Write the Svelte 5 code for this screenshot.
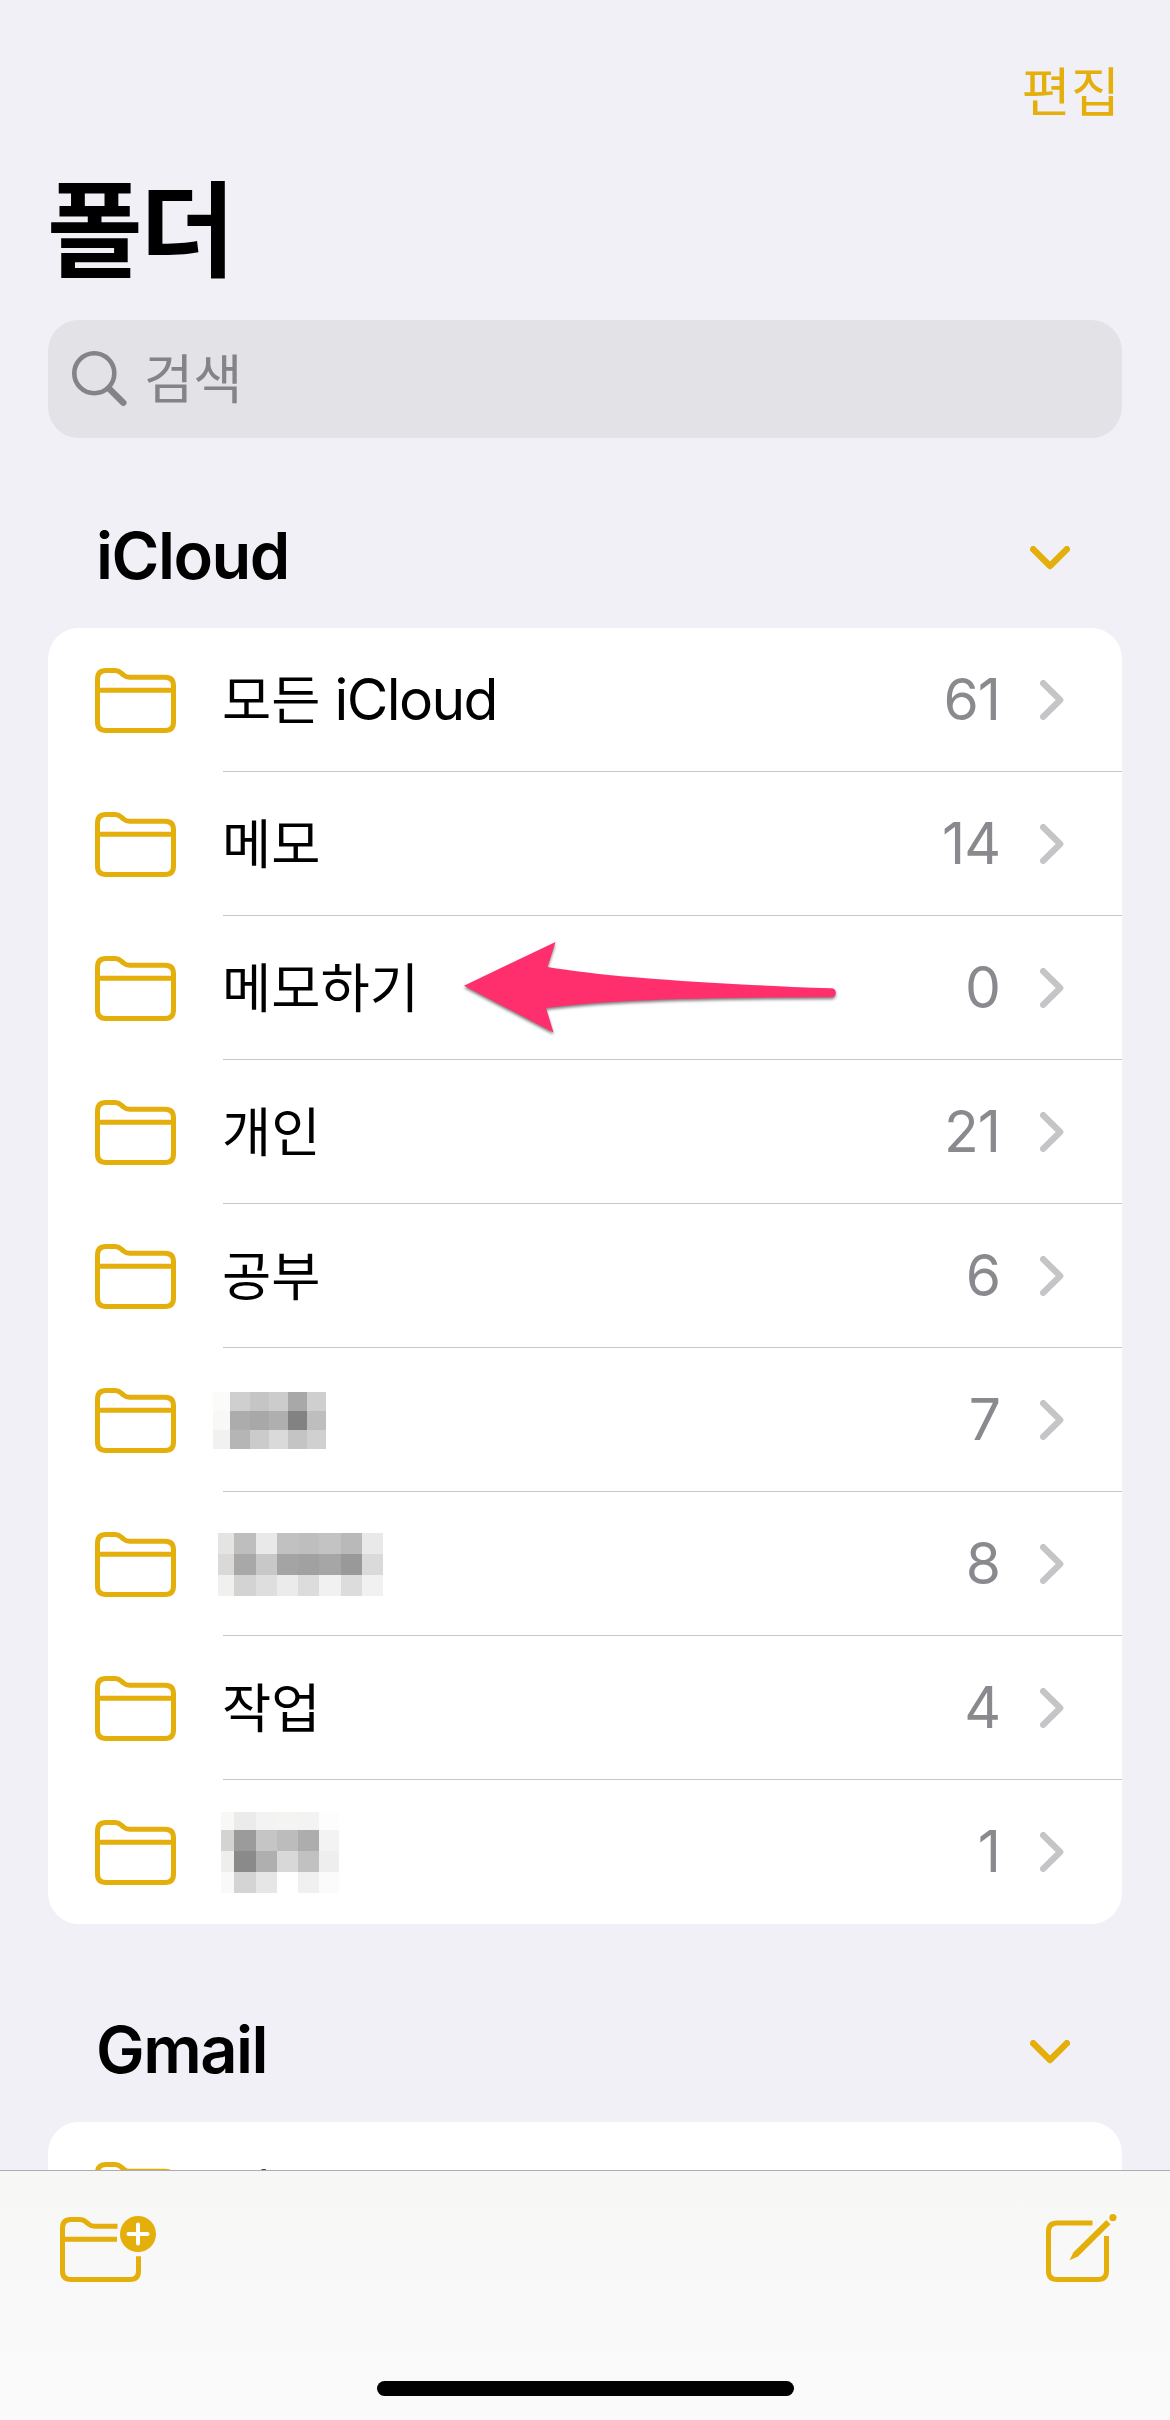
<script lang="ts">
	type Mosaic = { shift: number; xs: number[]; ys: number[]; shades: string[][] };
	type Folder = { name?: string; latin?: string; count: number; marked?: boolean; mosaic?: Mosaic };

	const icloud: Folder[] = [
		{ name: '모든', latin: 'iCloud', count: 61 },
		{ name: '메모', count: 14 },
		{ name: '메모하기', count: 0, marked: true },
		{ name: '개인', count: 21 },
		{ name: '공부', count: 6 },
		{
			count: 7,
			mosaic: {
				shift: -10,
				xs: [0, 17, 36.5, 55.5, 74.5, 94, 113],
				ys: [0, 19, 38, 57],
				shades: [
					['#fbfbf9', '#cfcfcf', '#c5c5c5', '#cccccc', '#a8a8a8', '#cfcfcf'],
					['#f8f8f6', '#acacac', '#a8a8a8', '#afafaf', '#828282', '#bebebe'],
					['#f1f1ef', '#b5b5b5', '#cbcbcb', '#dadada', '#c4c4c4', '#d0d0d0']
				]
			}
		},
		{
			count: 8,
			mosaic: {
				shift: -5,
				xs: [0, 16, 37.5, 58.7, 80, 101, 122.5, 143.7, 165],
				ys: [0, 21, 42, 63],
				shades: [
					['#e4e4e2', '#bebebe', '#e9e9e9', '#c1c1c1', '#bebebe', '#c3c3c3', '#b9b9b9', '#e9e9e9'],
					['#dad9d7', '#a8a8a8', '#c8c8c8', '#a4a4a4', '#a1a1a1', '#a6a6a6', '#999999', '#dadada'],
					['#f0f0ee', '#d3d3d3', '#dedede', '#ebebeb', '#dcdcdc', '#f1f1f1', '#dcdcdc', '#f1f1f1']
				]
			}
		},
		{ name: '작업', count: 4 },
		{
			count: 1,
			mosaic: {
				shift: -2,
				xs: [0, 13, 34.7, 55.7, 77, 98, 118],
				ys: [0, 18, 39, 60, 81],
				shades: [
					['#f8f8f6', '#ebebeb', '#f3f3f3', '#f4f4f2', '#f3f3f3', '#fdfdfd'],
					['#d3d3d1', '#9b9b9b', '#c5c5c5', '#bcbcbc', '#adadad', '#f3f3f3'],
					['#eeeeec', '#8a8a8a', '#afafaf', '#d8d8d8', '#c1c1c1', '#eeeeee'],
					['#f9f9f9', '#d4d4d4', '#e6e6e6', '#ffffff', '#f0f0f0', '#fbfbfb']
				]
			}
		}
	];

	const sections: { title: string; folders: Folder[] }[] = [
		{ title: 'iCloud', folders: icloud },
		{ title: 'Gmail', folders: [{ name: '메모', count: 0 }] }
	];
</script>

<div class="screen">
	<div class="scroll">
		<nav><button class="edit">편집</button></nav>
		<h1>폴더</h1>
		<div class="search">
			<svg width="58" height="58" viewBox="0 0 58 58">
				<circle cx="24.3" cy="23.3" r="20" stroke-width="4.6" />
				<path d="M39 38.5L53.3 52.8" stroke-width="6.4" />
			</svg>
			<span>검색</span>
		</div>

		{#each sections as section}
			<section>
				<header>
					<h2>{section.title}</h2>
					<svg class="down" width="40" height="24" viewBox="0 0 40 24">
						<path d="M3.2 3.2L20 20L36.8 3.2" />
					</svg>
				</header>
				<div class="card">
					{#each section.folders as folder}
						<div class="row">
							<svg class="folder" width="81" height="65" viewBox="0 0 81 65">
								<path
									d="M2.5 54V11Q2.5 2.5 11 2.5H20Q23.5 2.5 26 4.8L28.5 7Q31 9.3 34.5 9.3H70Q78.5 9.3 78.5 17.8V54Q78.5 62.5 70 62.5H11Q2.5 62.5 2.5 54ZM2.5 22.3H78.5"
								/>
							</svg>
							<div class="content">
								{#if folder.mosaic}
									{@const m = folder.mosaic}
									<svg
										class="mosaic"
										width={m.xs[m.xs.length - 1]}
										height={m.ys[m.ys.length - 1]}
										style:margin-left="{m.shift}px"
									>
										{#each m.shades as line, y}
											{#each line as shade, x}
												<rect
													x={m.xs[x]}
													y={m.ys[y]}
													width={m.xs[x + 1] - m.xs[x]}
													height={m.ys[y + 1] - m.ys[y]}
													fill={shade}
												/>
											{/each}
										{/each}
									</svg>
								{:else}
									<span class="name">{folder.name}</span>
								{/if}
								{#if folder.latin}
									<span class="latin">{folder.latin}</span>
								{/if}
								{#if folder.marked}
									<svg class="arrow" width="374" height="94" viewBox="464 940 374 94">
										<path
											d="M465 984.7L556.5 941L548.5 966Q630 980 832 987.3Q836.8 987.5 836.8 991.8Q836.8 996.3 832 996.2Q625 996 547 1007L554.5 1031.5Z"
										/>
									</svg>
								{/if}
								<span class="count">{folder.count}</span>
								<svg class="next" width="24" height="40" viewBox="0 0 24 40">
									<path d="M3.2 3.2L20.2 20L3.2 36.8" />
								</svg>
							</div>
						</div>
					{/each}
				</div>
			</section>
		{/each}
	</div>

	<footer>
		<div class="tools">
			<svg class="tool" width="98" height="68" viewBox="0 0 98 68">
				<path
					d="M57.5 11.3H34.5Q31 11.3 28.5 9L26 6.8Q23.5 4.5 20 4.5H11Q2.5 4.5 2.5 13V56Q2.5 64.5 11 64.5H70Q78.5 64.5 78.5 56V41.3M2.5 24.3H57"
				/>
				<circle cx="78" cy="19" r="18" />
				<path class="plus" d="M78 9.5V28.5M68.5 19H87.5" />
			</svg>
			<svg class="tool" width="72" height="72" viewBox="0 0 72 72">
				<path d="M46.5 8H11Q2.500 8 2.500 16.500V56Q2.500 64.500 11 64.500H52Q60.500 64.500 60.500 56V21" />
				<path class="cut" d="M40 27.500L70 -2.500" />
				<path class="pencil" d="M60.300 5L64.500 9.200L32 41.500L23.500 45.200L27.500 37.200Z" />
				<circle cx="66.900" cy="2.600" r="3.600" />
			</svg>
		</div>
		<div class="home"></div>
	</footer>
</div>

<style>
	:global(body) {
		margin: 0;
	}
	.screen {
		display: flex;
		flex-direction: column;
		width: 1170px;
		height: 2420px;
		overflow: hidden;
		background: #f1f0f6;
		color: #000;
		font-family: Inter, 'Noto Sans CJK KR', sans-serif;
	}
	.scroll {
		height: 2170px;
		flex: none;
		overflow: hidden;
		padding: 0 48px;
		box-sizing: border-box;
	}
	svg {
		display: block;
		flex: none;
		fill: none;
		stroke-linecap: round;
		stroke-linejoin: round;
	}
	nav {
		display: flex;
		justify-content: flex-end;
		padding: 49px 2px 0 0;
	}
	.edit {
		border: 0;
		padding: 0;
		background: none;
		color: #e4af0b;
		font: 53.5px/80px 'Noto Sans CJK KR', sans-serif;
	}
	h1 {
		margin: 30px 0 0 -1px;
		height: 161px;
		font: 700 104px/130px 'Noto Sans CJK KR', sans-serif;
		letter-spacing: -3px;
	}
	.search {
		display: flex;
		align-items: center;
		gap: 16px;
		height: 118px;
		padding-left: 22px;
		border-radius: 31px;
		background: #e3e2e7;
		color: #838388;
		font: 53.5px/80px 'Noto Sans CJK KR', sans-serif;
	}
	.search svg {
		stroke: #838388;
	}
	.search span {
		padding-bottom: 6px;
	}
	section header {
		display: flex;
		align-items: center;
		justify-content: space-between;
		box-sizing: border-box;
		height: 190px;
		padding: 48px 52px 0 48px;
	}
	section + section header {
		height: 198px;
		padding-top: 56px;
	}
	h2 {
		margin: 0;
		padding-bottom: 2px;
		font-size: 65px;
		line-height: 80px;
		font-weight: 600;
		letter-spacing: -1.5px;
	}
	.down {
		margin-top: 2px;
		stroke: #e4af0b;
		stroke-width: 6.4;
	}
	.card {
		border-radius: 31px;
		background: #fff;
	}
	.row {
		display: flex;
		align-items: center;
		gap: 47px;
		height: 144px;
		padding-left: 47px;
	}
	.folder {
		stroke: #e4af0b;
		stroke-width: 5;
	}
	.content {
		display: flex;
		flex: 1;
		align-items: center;
		height: 143px;
		padding-right: 58px;
		border-bottom: 1px solid #c6c6c8;
	}
	.row:last-child .content {
		border-color: transparent;
	}
	.name {
		margin-left: -1px;
		padding-bottom: 6px;
		font: 53.5px/80px 'Noto Sans CJK KR', sans-serif;
	}
	.latin {
		margin-left: 14px;
		font-size: 57px;
		line-height: 80px;
		letter-spacing: -1.6px;
	}
	.mosaic {
		margin-top: 2px;
		shape-rendering: crispEdges;
	}
	.arrow {
		margin-left: 44px;
		overflow: visible;
		fill: #ff2f6d;
		filter: drop-shadow(0 2px 1.5px rgba(0, 0, 0, 0.5));
	}
	.count {
		margin-left: auto;
		color: #8a8a8e;
		font-size: 57px;
		line-height: 80px;
		letter-spacing: -1px;
	}
	.next {
		margin-left: 40px;
		stroke: #c5c5c7;
		stroke-width: 6.4;
	}
	footer {
		display: flex;
		flex: 1;
		flex-direction: column;
		align-items: center;
		justify-content: space-between;
		border-top: 1px solid #adadb0;
		background: linear-gradient(#f7f7f6, #fafafb);
	}
	.tools {
		display: flex;
		align-self: stretch;
		justify-content: space-between;
		padding: 44px 52px 0 60px;
	}
	.tool {
		overflow: visible;
		stroke: #e4af0b;
		stroke-width: 5;
		stroke-linecap: butt;
	}
	.tool circle,
	.pencil {
		fill: #e4af0b;
		stroke: none;
	}
	.tool .plus {
		stroke: #fff;
		stroke-width: 4;
		stroke-linecap: round;
	}
	.tool .cut {
		stroke: #f8f8f7;
		stroke-width: 14;
	}
	.home {
		width: 417px;
		height: 15px;
		margin-bottom: 24px;
		border-radius: 8px;
		background: #000;
	}
</style>
